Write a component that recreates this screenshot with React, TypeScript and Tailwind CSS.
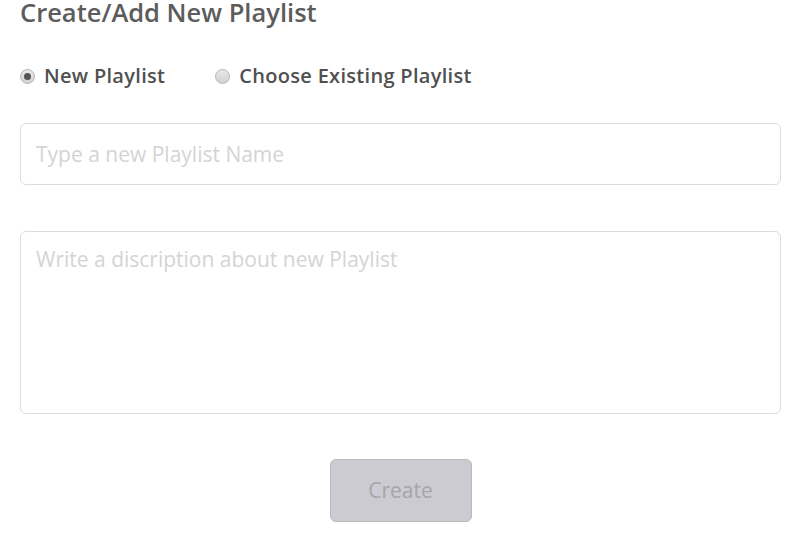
import { useState } from "react";

export default function App() {
	const [mode, setMode] = useState<"new" | "existing">("new");

	return (
		<div className="min-h-[536px] w-[806px] bg-white font-['Open_Sans','Noto_Sans',sans-serif] text-[#555]">
			<div className="w-[781px] pl-[20px]">
				<h2 className="h-[24px] text-[25.5px] font-semibold leading-[24px] text-[#5c5c5c]">Create/Add New Playlist</h2>

				<div className="mt-[38px] flex h-[28px] items-center gap-[50px] text-[20px] font-semibold tracking-[0.3px] text-[#505050]">
					<label className="flex items-center gap-[9px]">
						<Radio checked={mode === "new"} onClick={() => setMode("new")} />
						New Playlist
					</label>
					<label className="flex items-center gap-[9px]">
						<Radio checked={mode === "existing"} onClick={() => setMode("existing")} />
						Choose Existing Playlist
					</label>
				</div>

				<input
					type="text"
					placeholder="Type a new Playlist Name"
					className="mt-[33px] block h-[62px] w-full rounded-[6px] border border-[#dcdcdc] px-[15px] text-[21px] placeholder:text-[#d4d4d4] focus:outline-none"
				/>

				<textarea
					placeholder="Write a discription about new Playlist"
					className="mt-[46px] block h-[183px] w-full resize-none rounded-[6px] border border-[#dcdcdc] px-[15px] pt-[13px] text-[21px] leading-[28px] placeholder:text-[#d4d4d4] focus:outline-none"
				/>

				<div className="mt-[45px] flex justify-center">
					<button className="h-[63px] w-[142px] rounded-[6px] border border-[#b9b9be] bg-[#cbcbd1] text-[21px] text-[#a5a5ab]">
						Create
					</button>
				</div>
			</div>
		</div>
	);
}

function Radio({ checked, onClick }: { checked: boolean; onClick: () => void }) {
	return (
		<span
			onClick={onClick}
			className="flex h-[15px] w-[15px] items-center justify-center rounded-full border border-[#b5b5b5] bg-gradient-to-b from-[#e8e8e8] to-[#d2d2d2]"
		>
			{checked && <span className="h-[7px] w-[7px] rounded-full bg-[#555]" />}
		</span>
	);
}
